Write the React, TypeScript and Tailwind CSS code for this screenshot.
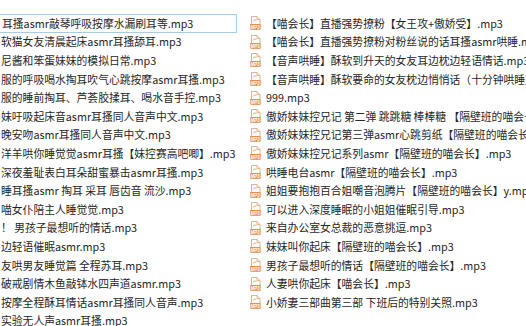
import React from "react";

const leftNames = [
  "耳搔asmr敲琴呼吸按摩水漏刷耳等.mp3",
  "软猫女友清晨起床asmr耳搔舔耳.mp3",
  "尼酱和笨蛋妹妹的模拟日常.mp3",
  "服的呼吸喝水掏耳吹气心跳按摩asmr耳搔.mp3",
  "服的睡前掏耳、芦荟胶揉耳、喝水音手控.mp3",
  "妹吁吸起床音asmr耳搔同人音声中文.mp3",
  "晚安吻asmr耳搔同人音声中文.mp3",
  "洋羊哄你睡觉觉asmr耳搔【妹控赛高吧唧】.mp3",
  "深夜羞耻表白耳朵甜蜜暴击asmr耳搔.mp3",
  "睡耳搔asmr 掏耳 采耳 唇齿音 流沙.mp3",
  "喵女仆陪主人睡觉觉.mp3",
  "！ 男孩子最想听的情话.mp3",
  "边轻语催眠asmr.mp3",
  "友哄男友睡觉篇 全程苏耳.mp3",
  "破戒剧情木鱼敲钵水四声道asmr.mp3",
  "按摩全程酥耳情话asmr耳搔同人音声.mp3",
  "实验无人声asmr耳搔.mp3",
];

const rightNames = [
  "【喵会长】直播强势撩粉【女王攻+傲娇受】.mp3",
  "【喵会长】直播强势撩粉对粉丝说的话耳搔asmr哄睡.mp3",
  "【音声哄睡】酥软到升天的女友耳边枕边轻语情话.mp3",
  "【音声哄睡】酥软要命的女友枕边悄悄话（十分钟哄睡）.mp3",
  "999.mp3",
  "傲娇妹妹控兄记 第二弹 跳跳糖 棒棒糖 【隔壁班的喵会长】.mp3",
  "傲娇妹妹控兄记第三弹asmr心跳剪纸【隔壁班的喵会长】.mp3",
  "傲娇妹妹控兄记系列asmr【隔壁班的喵会长】.mp3",
  "哄睡电台asmr【隔壁班的喵会长】.mp3",
  "姐姐要抱抱百合姐嘲音泡腾片【隔壁班的喵会长】y.mp3",
  "可以进入深度睡眠的小姐姐催眠引导.mp3",
  "来自办公室女总裁的恶意挑逗.mp3",
  "妹妹叫你起床【隔壁班的喵会长】.mp3",
  "男孩子最想听的情话【隔壁班的喵会长】.mp3",
  "人妻哄你起床【喵会长】.mp3",
  "小娇妻三部曲第三部 下班后的特别关照.mp3",
];

function Mp3Icon() {
  return (
    <svg width="11" height="14" viewBox="0 0 11 14" className="shrink-0">
      <path d="M1.5 0.5 H7 L10 3.5 V13.5 H1.5 Z" fill="#ffffff" stroke="#d8b496" strokeWidth="1" />
      <path d="M7 0.5 V3.5 H10" fill="#f6e6d8" stroke="#d8b496" strokeWidth="1" />
      <path d="M3 5.5 C4 3.5 5.5 3.5 6.5 5" fill="none" stroke="#eea26a" strokeWidth="1" />
      <rect x="0" y="8" width="10.5" height="5.5" fill="#ee8c4c" />
      <text x="5.2" y="12.6" fontSize="4.6" fontWeight="700" textAnchor="middle" fill="#ffffff" fontFamily="Liberation Sans, sans-serif">
        MP3
      </text>
    </svg>
  );
}

export default function App() {
  return (
    <div className="w-[526px] h-[326px] overflow-hidden bg-white text-[#262626] text-[10.8px] leading-none font-['Noto_Sans_CJK_SC','Noto_Sans',sans-serif]">
      <div className="flex pt-[14px]">
        {/* left column, names cut off by the window edge */}
        <div className="w-[237px] shrink-0 flex flex-col">
          {leftNames.map((name, i) => (
            <div
              key={i}
              className={`h-[18.6px] flex items-center whitespace-nowrap overflow-hidden ${
                i === 0 ? "-ml-px pl-[2px] border border-[#a9cbea]" : "pl-[1px]"
              }`}
            >
              {name}
            </div>
          ))}
        </div>

        {/* right column */}
        <div className="ml-[13px] flex flex-col">
          {rightNames.map((name, i) => (
            <div key={i} className="h-[18.6px] flex items-center gap-[5px] whitespace-nowrap">
              <Mp3Icon />
              <span>{name}</span>
            </div>
          ))}
        </div>
      </div>
    </div>
  );
}
